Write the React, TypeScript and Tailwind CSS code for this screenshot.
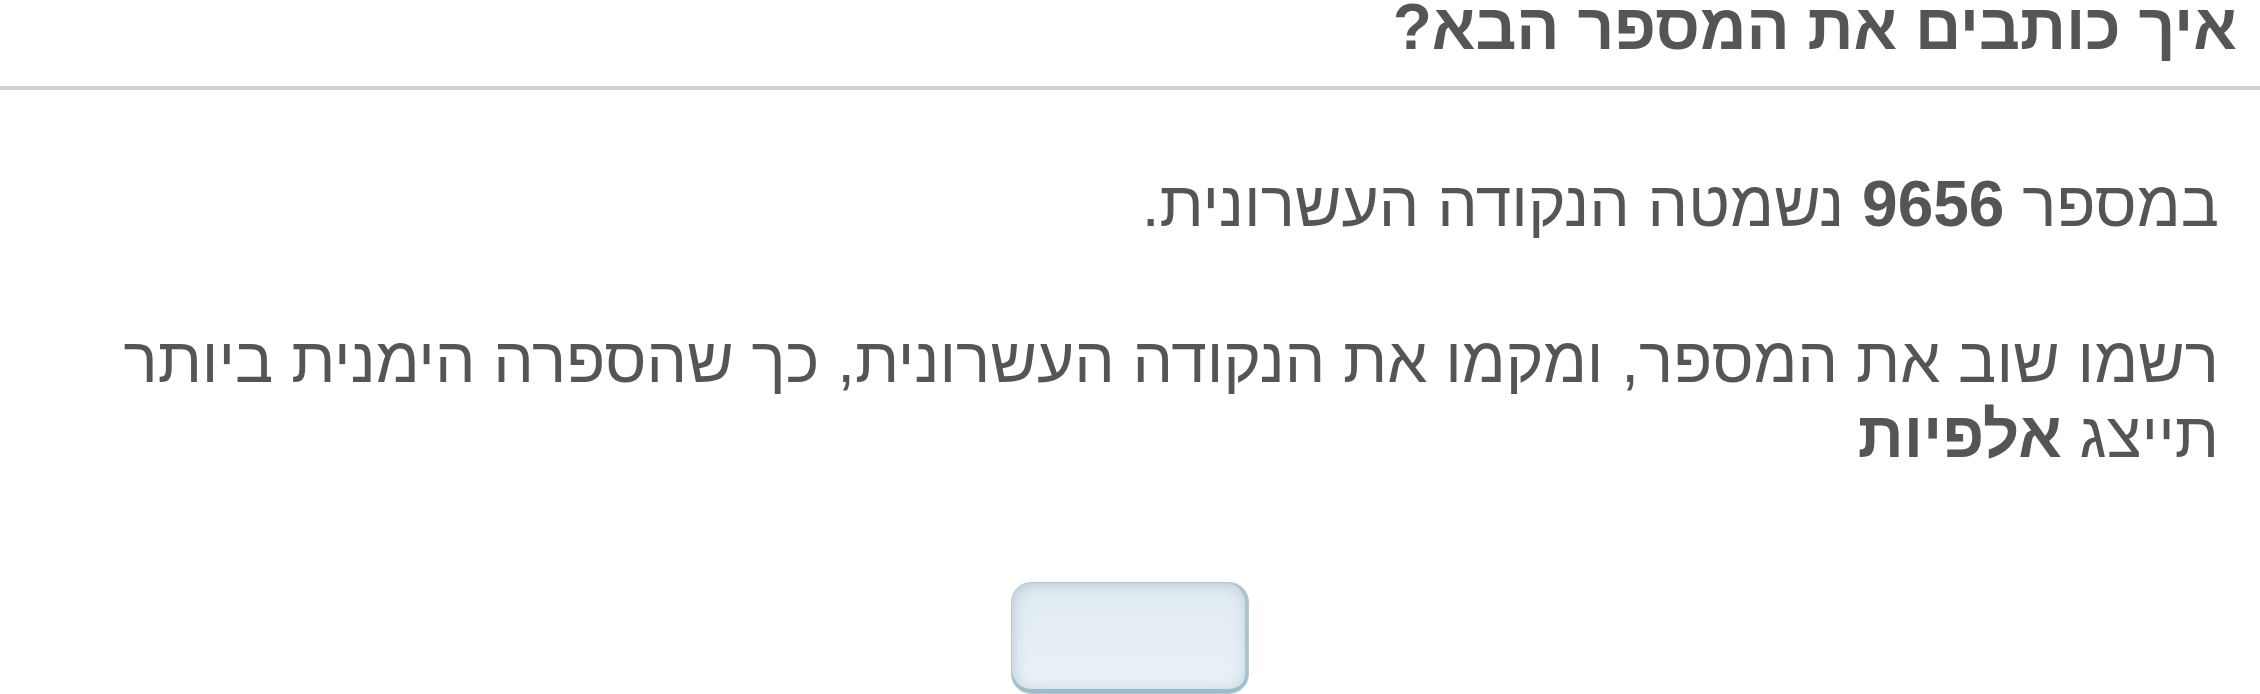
const Home = () => {
  return (
    <div
      dir="rtl"
      className="h-[694px] w-full overflow-hidden bg-white text-[#555555] font-['Liberation_Sans',Arial,sans-serif]"
    >
      <h1 className="-mt-[5px] border-b-4 border-[#d3d3d3] pb-[27px] pr-[23px] text-[64px] font-bold leading-[64px]">
        איך כותבים את המספר הבא?
      </h1>

      <div className="pr-[41px] pl-[40px] text-[64px] leading-[75px]">
        <p className="mt-[77px]">
          במספר <b>9656</b> נשמטה הנקודה העשרונית.
        </p>
        <p className="mt-[81px]">
          רשמו שוב את המספר, ומקמו את הנקודה העשרונית, כך שהספרה הימנית ביותר
          תייצג <b>אלפיות</b>
        </p>
      </div>

      <div className="mt-[109px] flex justify-center">
        <button
          type="button"
          className="h-[112px] w-[238px] rounded-[20px] border border-[#b4c8d2] bg-gradient-to-b from-[#e1ebf2] to-[#e9f2f9] shadow-[inset_0_-4px_0_#9dbccb,inset_-3px_0_0_#a9c3cf,inset_0_0_16px_rgba(105,135,150,0.4)]"
        />
      </div>
    </div>
  );
};

export default Home;
